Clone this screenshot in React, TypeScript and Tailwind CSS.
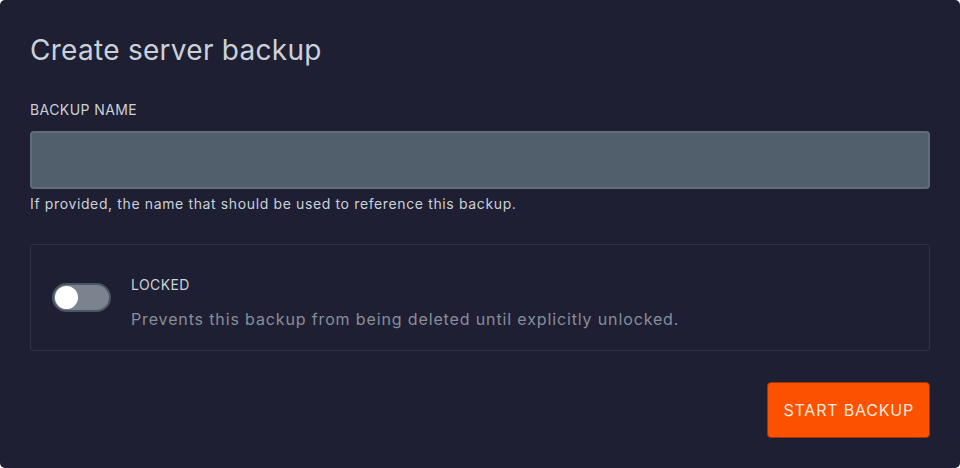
import React, { useState } from 'react'

export default function App() {
  const [locked, setLocked] = useState(false)
  const [name, setName] = useState('')

  return (
    <div className="h-[468px] w-[960px] bg-white" style={{ fontFamily: 'Inter, "Noto Sans", sans-serif' }}>
      <div className="h-full w-full rounded-[5px] bg-[#1f1f33] px-[30px] pt-[30px]">
        <h2 className="text-[28px] leading-[40px] tracking-[0.01em] text-[#cad1d8]">Create server backup</h2>

        {/* Nome do backup */}
        <label className="mt-[30px] block text-[14px] leading-[20px] tracking-[0.03em] text-[#cad1d8]">BACKUP NAME</label>
        <input
          value={name}
          onChange={(e) => setName(e.target.value)}
          className="mt-[11px] block h-[58px] w-full rounded-[4px] border-2 border-[#606d7b] bg-[#515f6c] px-3 text-[#cad1d8] outline-none"
        />
        <p className="mt-[5px] text-[14px] leading-[20px] tracking-[0.045em] text-[#cad1d8]">
          If provided, the name that should be used to reference this backup.
        </p>

        {/* Bloqueio */}
        <div className="mt-[30px] flex h-[107px] items-center gap-[20px] rounded-[4px] border border-[#2e3443] px-[21px]">
          <button
            onClick={() => setLocked(!locked)}
            className={`relative h-[29px] w-[59px] shrink-0 rounded-full border-2 border-[#4b5563] ${locked ? 'bg-[#f55200]' : 'bg-[#7a838e]'}`}
          >
            <span
              className={`absolute top-[1px] h-[23px] w-[23px] rounded-full bg-white ${locked ? 'left-[32px]' : 'left-[1px]'}`}
            />
          </button>
          <div className="pt-[8px]">
            <p className="text-[14px] leading-[20px] tracking-[0.03em] text-[#cad1d8]">LOCKED</p>
            <p className="mt-[14px] text-[16px] leading-[20px] tracking-[0.054em] text-[#878e99]">
              Prevents this backup from being deleted until explicitly unlocked.
            </p>
          </div>
        </div>

        <div className="mt-[31px] flex justify-end">
          <button className="h-[56px] rounded-[4px] border border-[#a33500] bg-[#fc5200] px-[15px] text-[16px] tracking-[0.05em] text-[#fde8de]">
            START BACKUP
          </button>
        </div>
      </div>
    </div>
  )
}
